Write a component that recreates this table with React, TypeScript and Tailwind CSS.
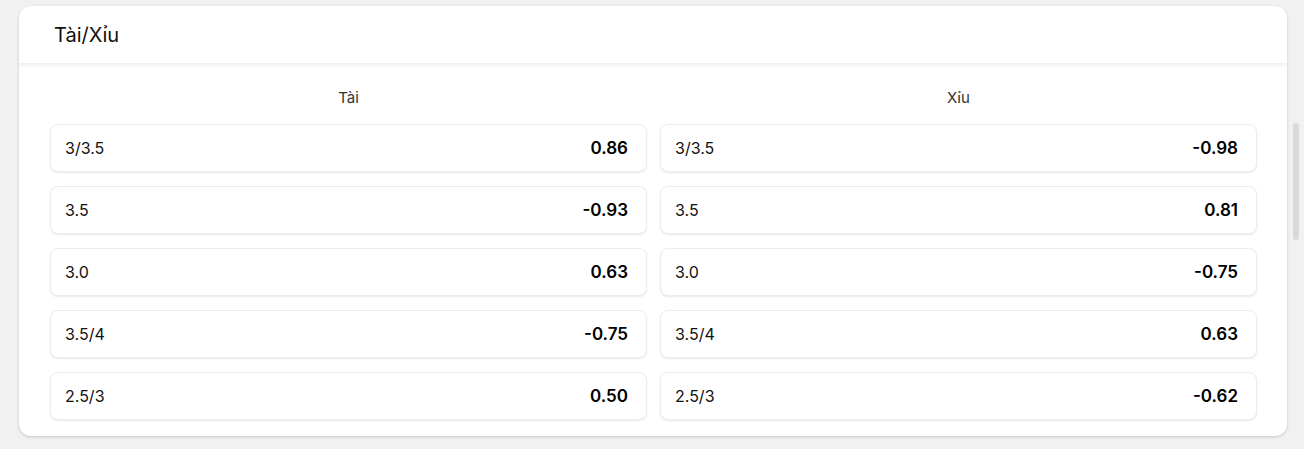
import React from "react";

const left = [
  ["3/3.5", "0.86"],
  ["3.5", "-0.93"],
  ["3.0", "0.63"],
  ["3.5/4", "-0.75"],
  ["2.5/3", "0.50"],
];
const right = [
  ["3/3.5", "-0.98"],
  ["3.5", "0.81"],
  ["3.0", "-0.75"],
  ["3.5/4", "0.63"],
  ["2.5/3", "-0.62"],
];

function Column({ title }: { title: React.ReactNode }) {
  return <div className="h-[34px] flex items-center justify-center text-[15px] text-[#333]">{title}</div>;
}

function Rows({ rows }: { rows: string[][] }) {
  return (
    <div className="flex flex-col gap-[14px] mt-[9px]">
      {rows.map(([l, v], i) => (
        <div
          key={i}
          className="h-[48px] rounded-[8px] border border-[#ededed] bg-white shadow-[0_1px_2px_rgba(0,0,0,0.09)] flex items-center justify-between pl-[14px] pr-[18px]"
        >
          <span className="text-[16px] text-[#111] -mt-[1px]">{l}</span>
          <span className="text-[17px] font-semibold text-black mt-[1px]">{v}</span>
        </div>
      ))}
    </div>
  );
}

const Hook = () => <span className="font-['Roboto',sans-serif]">ỉ</span>;

export default function App() {
  return (
    <div className="w-[1304px] h-[449px] bg-[#f1f1f1] flex pt-[6px] pl-[19px] font-['Inter',sans-serif]">
      <div className="w-[1268px] h-[430px] bg-white rounded-[12px] shadow-[0_1px_3px_rgba(0,0,0,0.18)] flex flex-col overflow-hidden">
        <div className="h-[57px] flex items-center pl-[35px] text-[20px] text-[#111] shadow-[0_2px_4px_rgba(0,0,0,0.08)] relative z-10">
          <span>
            Tài/X<Hook />u
          </span>
        </div>
        <div className="flex-1 grid grid-cols-2 gap-[13px] pl-[31px] pr-[30px] pt-[18px]">
          <div className="flex flex-col">
            <Column title="Tài" />
            <Rows rows={left} />
          </div>
          <div className="flex flex-col">
            <Column
              title={
                <span>
                  X<Hook />u
                </span>
              }
            />
            <Rows rows={right} />
          </div>
        </div>
      </div>
      <div className="flex-1 flex justify-center pt-[117px]">
        <div className="w-[6px] h-[117px] rounded-full bg-[#d9d9d9]" />
      </div>
    </div>
  );
}
